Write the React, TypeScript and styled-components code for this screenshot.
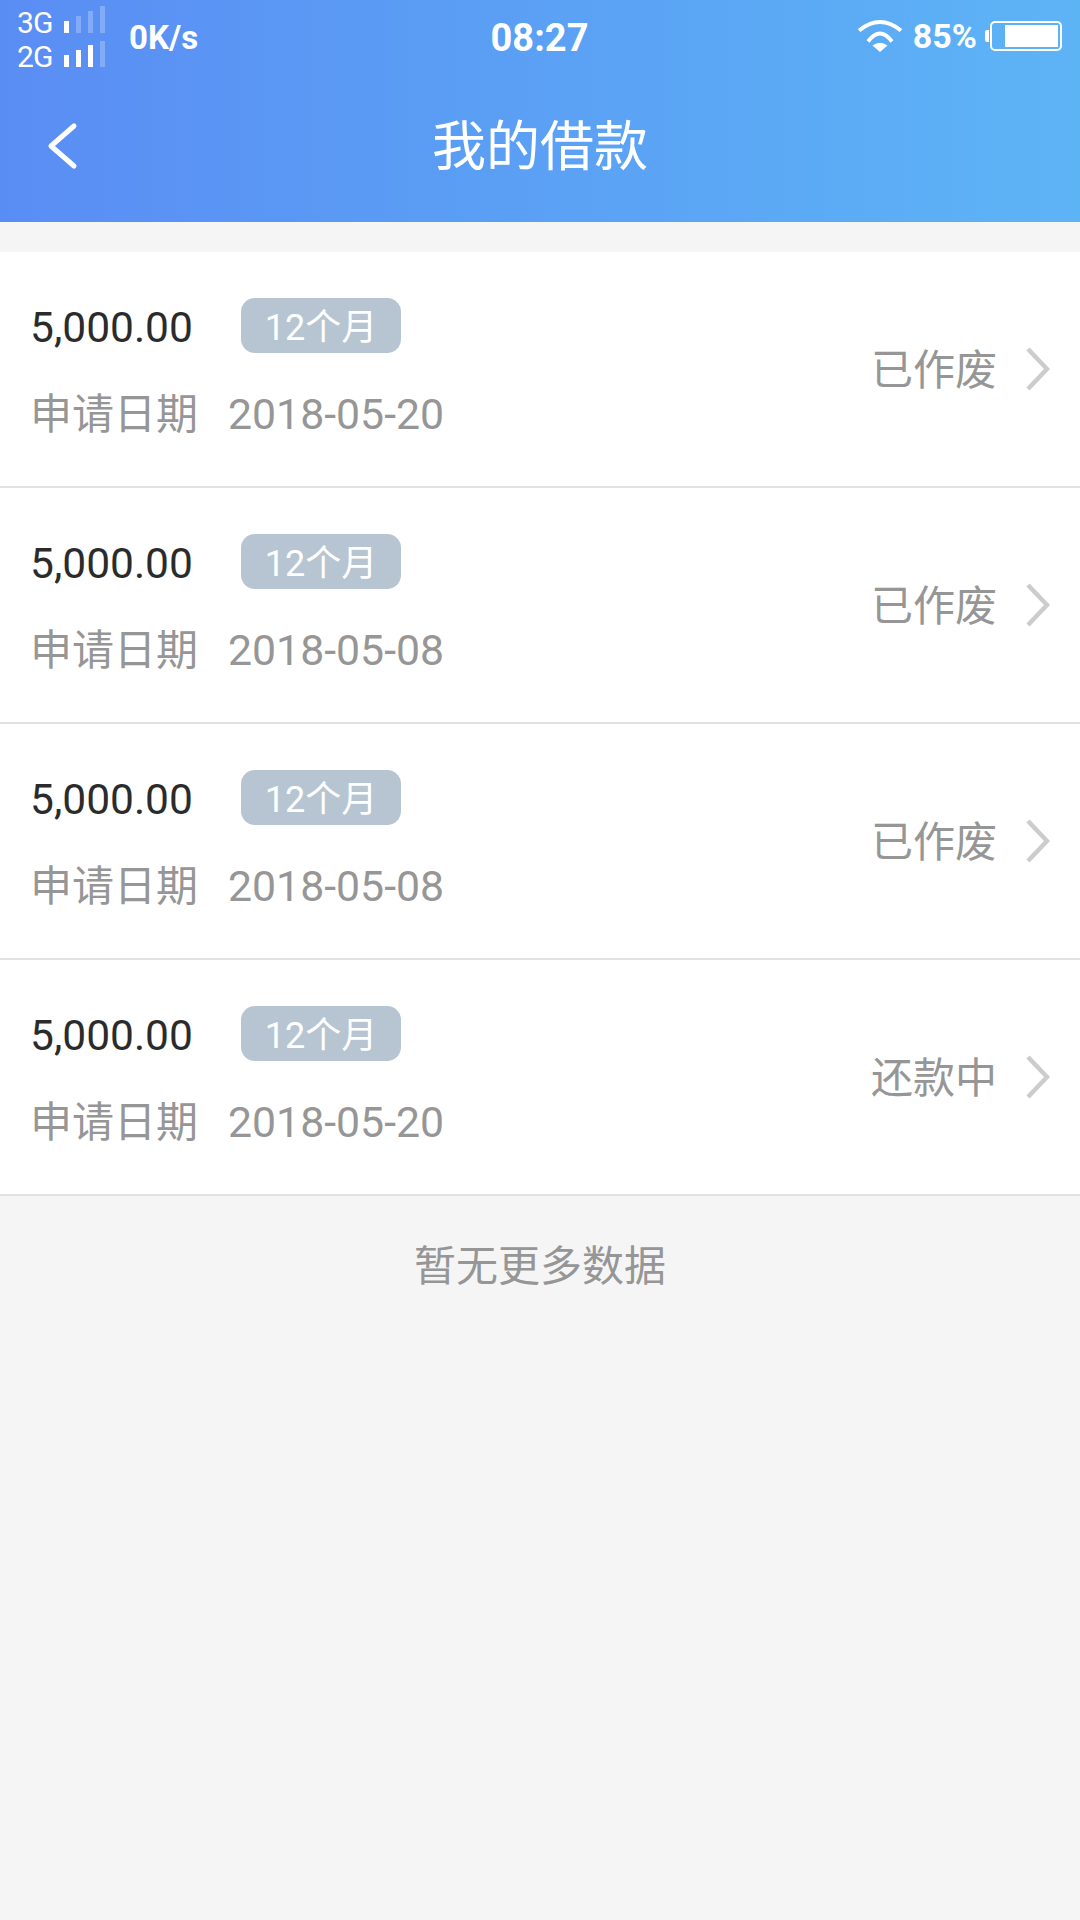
import React from "react";
import styled, { createGlobalStyle } from "styled-components";

const Global = createGlobalStyle`
  html, body { margin: 0; padding: 0; background: #f5f5f5; }
  body { font-family: Roboto, "Noto Sans CJK SC", sans-serif; }
  * { box-sizing: border-box; }
`;
const Page = styled.div`
  width: 1080px;
  height: 1920px;
  background: #f5f5f5;
  overflow: hidden;
`;
const Header = styled.header`
  height: 222px;
  background: linear-gradient(90deg, #5a8df4 0%, #5ba4f5 60%, #5db4f5 100%);
  color: #fff;
`;
const StatusBar = styled.div`
  height: 72px;
  display: grid;
  grid-template-columns: 1fr auto 1fr;
  align-items: start;
  padding: 0 18px 0 17px;
`;
const StatusLeft = styled.div`
  display: flex;
  align-items: flex-start;
`;
const Networks = styled.div`
  display: flex;
  flex-direction: column;
  width: 112px;
  padding-top: 6px;
`;
const Network = styled.div`
  display: flex;
  align-items: flex-end;
  gap: 10px;
  height: 34px;
  font-size: 30px;
  font-weight: 400;
  line-height: 34px;
  letter-spacing: -0.9px;
`;
const BarsIcon = styled.svg`
  flex: none;
  margin-bottom: 6px;
`;
const Speed = styled.span`
  font-size: 33px;
  font-weight: 700;
  line-height: 38px;
  margin-top: 19px;
`;
const Clock = styled.span`
  font-size: 38px;
  font-weight: 700;
  line-height: 44px;
  margin-top: 16px;
`;
const StatusRight = styled.div`
  display: flex;
  align-items: center;
  justify-content: flex-end;
  margin-top: 17px;
  height: 38px;
`;
const Percent = styled.span`
  font-size: 34px;
  font-weight: 700;
  line-height: 38px;
  margin: 0 13px 0 10px;
`;
const Battery = styled.div`
  position: relative;
  width: 72px;
  height: 30px;
  border: 2px solid #fff;
  border-radius: 5px;
  padding: 2px 2px 2px 13px;
  margin-top: -1px;
  &::before {
    content: "";
    position: absolute;
    left: -7px;
    top: 7px;
    width: 4px;
    height: 12px;
    background: #fff;
    border-radius: 2px 0 0 2px;
  }
`;
const BatteryFill = styled.div`
  width: 100%;
  height: 100%;
  background: #fff;
`;
const Nav = styled.div`
  position: relative;
  height: 150px;
  padding-bottom: 8px;
  display: flex;
  align-items: center;
  justify-content: center;
`;
const BackIcon = styled.svg`
  position: absolute;
  left: 46px;
  top: 50px;
`;
const Title = styled.h1`
  margin: 0;
  font-size: 54px;
  font-weight: 400;
  line-height: 64px;
  font-family: "Noto Sans CJK SC", sans-serif;
`;
const List = styled.main`
  margin-top: 30px;
  background: #fff;
`;
const Row = styled.div`
  height: 236px;
  display: flex;
  align-items: center;
  justify-content: space-between;
  padding: 0 30px 0 30px;
  border-bottom: 2px solid #e2e2e2;
`;
const Info = styled.div`
  display: flex;
  flex-direction: column;
  gap: 32px;
`;
const TopLine = styled.div`
  display: flex;
  align-items: flex-start;
  height: 55px;
`;
const Amount = styled.span`
  font-size: 42.5px;
  line-height: 60px;
  color: #2b2b2b;
  width: 211px;
`;
const Badge = styled.span`
  width: 160px;
  height: 55px;
  background: #b6c5d1;
  border-radius: 14px;
  color: #fff;
  font-size: 36px;
  line-height: 60px;
  text-align: center;
`;
const DateLine = styled.div`
  display: flex;
  gap: 30px;
  height: 56px;
  font-size: 42px;
  line-height: 59px;
  color: #969696;
`;
const DateValue = styled.span`
  font-size: 42.8px;
`;
const Side = styled.div`
  display: flex;
  align-items: center;
  gap: 29px;
`;
const Status = styled.span`
  font-size: 42px;
  line-height: 56px;
  padding-top: 3px;
  color: #969696;
`;
const Footer = styled.div`
  padding-top: 43px;
  text-align: center;
  font-size: 42px;
  line-height: 56px;
  color: #969696;
`;

const Bars = ({ lit, offset = 0 }: { lit: number; offset?: number }) => (
  <BarsIcon width="42" height="28" viewBox="0 0 42 28">
    {[0, 1, 2, 3].map((i) => {
      const h = 12 + i * 5 + (i === 3 ? offset : 0);
      return <rect key={i} x={1 + i * 12} y={27 - h} width="5" height={h} fill="#fff" opacity={i < lit ? 1 : 0.25} />;
    })}
  </BarsIcon>
);

const Wifi = () => (
  <svg width="46" height="34" viewBox="0 0 46 34">
    <g fill="none" stroke="#fff" strokeWidth="4">
      <path d="M2 11.500 Q23 -5.500 44 11.500" />
      <path d="M11 22.500 Q23 6.500 35 22.500" />
    </g>
    <path d="M23 33 L15.500 26.500 Q23 21 30.500 26.500 Z" fill="#fff" />
  </svg>
);

const Chevron = () => (
  <svg width="24" height="44" viewBox="0 0 24 44">
    <path d="M2 2 L21 22 L2 42" fill="none" stroke="#cccccc" strokeWidth="4.500" />
  </svg>
);

const rows = [
  { date: "2018-05-20", status: "已作废" },
  { date: "2018-05-08", status: "已作废" },
  { date: "2018-05-08", status: "已作废" },
  { date: "2018-05-20", status: "还款中" },
];

export default function App() {
  return (
    <Page>
      <Global />
      <Header>
        <StatusBar>
          <StatusLeft>
            <Networks>
              <Network>3G<Bars lit={1} /></Network>
              <Network>2G<Bars lit={3} offset={-1} /></Network>
            </Networks>
            <Speed>0K/s</Speed>
          </StatusLeft>
          <Clock>08:27</Clock>
          <StatusRight>
            <Wifi />
            <Percent>85%</Percent>
            <Battery><BatteryFill /></Battery>
          </StatusRight>
        </StatusBar>
        <Nav>
          <BackIcon width="32" height="48" viewBox="0 0 32 48">
            <path d="M28 4 L5 24 L28 44" fill="none" stroke="#fff" strokeWidth="5" strokeLinecap="round" strokeLinejoin="round" />
          </BackIcon>
          <Title>我的借款</Title>
        </Nav>
      </Header>
      <List>
        {rows.map((r, i) => (
          <Row key={i}>
            <Info>
              <TopLine>
                <Amount>5,000.00</Amount>
                <Badge>12个月</Badge>
              </TopLine>
              <DateLine>
                <span>申请日期</span>
                <DateValue>{r.date}</DateValue>
              </DateLine>
            </Info>
            <Side>
              <Status>{r.status}</Status>
              <Chevron />
            </Side>
          </Row>
        ))}
      </List>
      <Footer>暂无更多数据</Footer>
    </Page>
  );
}
